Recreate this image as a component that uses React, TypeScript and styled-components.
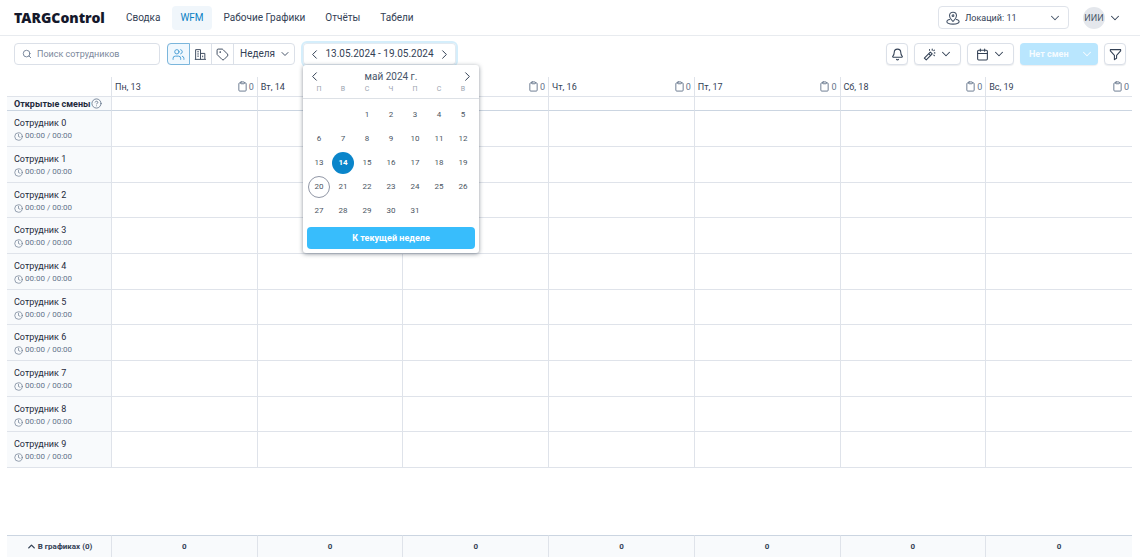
import React from 'react';
import styled, { createGlobalStyle, css } from 'styled-components';
import { Bell, Calendar, ChevronDown, ChevronLeft, ChevronRight, ChevronUp, CircleHelp, Clipboard, Clock, Search, Tag, Users } from 'lucide-react';

const GlobalStyle = createGlobalStyle`
  *, *::before, *::after { box-sizing: border-box; }
  body { margin: 0; background: #fff; color: #334155; font-family: Roboto, Inter, sans-serif; font-size: 10px; line-height: 12px; }
  button, input, select { font: inherit; color: inherit; margin: 0; }
  button { cursor: pointer; }
  svg { flex: none; display: block; }
`;

const Page = styled.div`
  display: flex;
  flex-direction: column;
  min-height: 100vh;
`;

const Header = styled.header`
  display: flex;
  align-items: center;
  height: 36px;
  padding: 0 18px 0 14px;
  border-bottom: 1px solid #e8ebef;
`;

const Logo = styled.a`
  width: 104px;
  color: #14182b;
  font-family: "Noto Sans", sans-serif;
  font-size: 14px;
  font-weight: 900;
  line-height: 20px;
  text-decoration: none;
`;

const Nav = styled.nav`
  display: flex;
  flex: 1;
  gap: 4px;
`;

const NavLink = styled.a<{ $active?: boolean }>`
  padding: 6px 8px;
  border-radius: 4px;
  color: ${p => (p.$active ? '#0a7fc4' : '#334155')};
  background: ${p => (p.$active ? '#f0f6fb' : 'transparent')};
  text-decoration: none;
`;

const SelectBox = styled.label<{ $wide?: boolean }>`
  display: flex;
  align-items: center;
  flex: 1;
  color: #475569;
  ${p => p.$wide && css`
    flex: none;
    width: 131px;
    height: 23px;
    gap: 5px;
    padding: 0 6px 0 7px;
    border: 1px solid #dfe3ea;
    border-radius: 4px;
  `}
`;

const Select = styled.select<{ $small?: boolean }>`
  flex: 1;
  min-width: 0;
  padding: 0;
  border: 0;
  outline: 0;
  appearance: none;
  background: transparent;
  color: #334155;
  font-size: ${p => (p.$small ? '9px' : '10px')};
`;

const Account = styled.button`
  display: flex;
  align-items: center;
  gap: 3px;
  margin-left: 14px;
  padding: 0;
  border: 0;
  background: none;
`;

const Avatar = styled.span`
  width: 22px;
  height: 22px;
  border-radius: 50%;
  background: #e4e7ec;
  color: #475569;
  font-size: 9px;
  line-height: 22px;
  text-align: center;
`;

const Toolbar = styled.div`
  display: flex;
  align-items: center;
  height: 36px;
  padding: 0 14px;
`;

const SearchBox = styled.label`
  display: flex;
  align-items: center;
  gap: 5px;
  width: 146px;
  height: 22px;
  margin-right: 7px;
  padding: 0 7px;
  border: 1px solid #dbe0e8;
  border-radius: 4px;
  color: #64748b;
`;

const SearchInput = styled.input`
  flex: 1;
  min-width: 0;
  padding: 0;
  border: 0;
  outline: 0;
  background: none;
  font-size: 9px;
  &::placeholder { color: #7c899c; opacity: 1; }
`;

const ViewGroup = styled.div`
  display: flex;
  height: 22px;
  margin-right: 8px;
  border: 1px solid #dbe0e8;
  border-radius: 4px;
`;

const ViewButton = styled.button<{ $active?: boolean }>`
  display: grid;
  place-items: center;
  width: 22px;
  padding: 0;
  border: 0;
  border-right: 1px solid #dbe0e8;
  background: none;
  color: #3f4c60;
  ${p => p.$active && css`
    margin: -1px 0 -1px -1px;
    width: 23px;
    border: 1px solid #7bb6dc;
    border-radius: 4px 0 0 4px;
    background: #f0f8fe;
    color: #4a9fd6;
  `}
`;

const Period = styled.div`
  display: flex;
  width: 60px;
  padding: 0 3px 0 6px;
`;

const DatePicker = styled.div`
  position: relative;
  flex: none;
`;

const DateRange = styled.div`
  display: flex;
  align-items: center;
  justify-content: space-between;
  width: 153px;
  height: 22px;
  padding: 0 4px;
  border-radius: 4px;
  box-shadow: 0 0 0 2px #d5eefb, inset 0 0 0 1px #e3eaf1;
`;

const PlainButton = styled.button`
  display: flex;
  align-items: center;
  padding: 0;
  border: 0;
  background: none;
  color: #334155;
`;

const Popup = styled.div`
  position: absolute;
  z-index: 2;
  top: 22px;
  left: 0;
  width: 176px;
  padding: 4px;
  border-radius: 3px;
  background: #fff;
  box-shadow: 0 1px 4px rgba(30, 41, 59, 0.5);
`;

const MonthBar = styled.div`
  display: flex;
  align-items: center;
  justify-content: space-between;
  height: 15px;
  color: #475569;
`;

const Days = styled.table`
  width: 100%;
  table-layout: fixed;
  border-collapse: collapse;
  color: #4b5563;
  font-size: 8px;
  text-align: center;
  th, td { padding: 0; }
  th { padding-bottom: 4px; color: #9aa3af; font-size: 7px; line-height: 10px; font-weight: 400; }
  td { height: 24px; }
`;

const Rule = styled.hr`
  margin: 0 -4px 4px;
  border: 0;
  border-top: 1px solid #dde1e6;
`;

const Day = styled.button<{ $selected?: boolean; $today?: boolean }>`
  display: block;
  width: 22px;
  height: 22px;
  margin: 0 auto;
  padding: 0;
  border: ${p => (p.$today ? '1px solid #9197a6' : '0')};
  border-radius: 50%;
  background: ${p => (p.$selected ? '#0a85ca' : 'transparent')};
  color: ${p => (p.$selected ? '#fff' : 'inherit')};
  font-weight: ${p => (p.$selected ? 700 : 400)};
`;

const CurrentWeek = styled.button`
  display: block;
  width: 100%;
  height: 22px;
  margin-top: 4px;
  padding: 0;
  border: 0;
  border-radius: 4px;
  background: #38bdfc;
  color: #fff;
  font-size: 9px;
  font-weight: 700;
`;

const Actions = styled.div`
  display: flex;
  gap: 6px;
  margin-left: auto;
`;

const Action = styled.button<{ $menu?: boolean }>`
  display: flex;
  align-items: center;
  justify-content: center;
  gap: 3px;
  width: ${p => (p.$menu ? '47px' : '22px')};
  height: 22px;
  padding: 0;
  border: 1px solid #dbe0e8;
  border-radius: 4px;
  background: #fff;
  box-shadow: 0 1px 1px rgba(30, 41, 59, 0.08);
  color: #334155;
`;

const Publish = styled(Action)`
  justify-content: space-between;
  width: 78px;
  padding: 0 4px 0 9px;
  border: 0;
  background: #b9e6fe;
  color: #f5fbff;
  font-size: 9px;
  font-weight: 700;
`;

const Main = styled.main`
  display: flex;
  flex: 1;
  flex-direction: column;
  justify-content: space-between;
  padding: 5px 8px 0 7px;
`;

const Schedule = styled.table`
  width: 100%;
  table-layout: fixed;
  border-collapse: separate;
  border-spacing: 0;
  th, td { padding: 0; text-align: left; font-weight: 400; border-right: 1px solid #dfe3ea; }
  tr > :last-child { border-right: 0; }
`;

const NameCol = styled.col`
  width: 105px;
`;

const HeadRow = styled.tr`
  height: 20px;
  th, td { border-bottom: 1px solid #dfe3ea; }
`;

const DayHead = styled.div`
  display: flex;
  align-items: center;
  gap: 1px;
  padding: 0 3px;
  color: #334155;
  font-size: 9px;
  span { flex: 1; }
  b { color: #64748b; font-weight: 400; }
`;

const OpenRow = styled.tr`
  height: 14px;
  th, td { border-bottom: 1px solid #cbd5e1; }
  th { background: #f8fafc; }
`;

const OpenLabel = styled.div`
  display: flex;
  align-items: center;
  gap: 1px;
  padding-left: 7px;
  color: #1e293b;
  font-size: 9px;
  font-weight: 700;
  svg { color: #64748b; }
`;

const StaffRow = styled.tr`
  height: 36px;
  &:nth-child(3n) { height: 35px; }
  th, td { border-bottom: 1px solid #dfe3ea; }
  th { background: #f8fafc; vertical-align: top; }
`;

const Person = styled.div`
  padding: 6px 0 0 7px;
  color: #1e293b;
  font-size: 9px;
`;

const Hours = styled.div`
  display: flex;
  align-items: center;
  gap: 2px;
  margin-top: 1px;
  color: #64748b;
  font-size: 8px;
`;

const TotalRow = styled.tr`
  height: 22px;
  background: #f8fafc;
  th, td { border-top: 1px solid #cbd5e1; color: #334155; font-size: 8px; font-weight: 700; text-align: center; }
`;

const TotalToggle = styled(PlainButton)`
  gap: 1px;
  margin: 0 auto;
`;

const days = ['Пн, 13', 'Вт, 14', 'Ср, 15', 'Чт, 16', 'Пт, 17', 'Сб, 18', 'Вс, 19'];
const weeks = [[0, 0, 1, 2, 3, 4, 5], [6, 7, 8, 9, 10, 11, 12], [13, 14, 15, 16, 17, 18, 19], [20, 21, 22, 23, 24, 25, 26], [27, 28, 29, 30, 31, 0, 0]];
const staff = Array.from({ length: 10 }, (_, i) => `Сотрудник ${i}`);

const LocationIcon = () => (
  <svg width="14" height="14" viewBox="0 0 24 24" fill="none" stroke="currentColor" strokeWidth="1.8" strokeLinecap="round" strokeLinejoin="round">
    <path d="M12 18c-2-2.200-6-5.500-6-10a6 6 0 0 1 12 0c0 4.500-4 7.800-6 10Z" />
    <circle cx="12" cy="8" r="1.500" />
    <path d="M6.500 14.500C3.500 15 1.500 16.300 1.500 18c0 2.500 4.700 4.500 10.500 4.500s10.500-2 10.500-4.500c0-1.700-2-3-5-3.500" />
  </svg>
);

const BuildingIcon = () => (
  <svg width="13" height="13" viewBox="0 0 24 24" fill="none" stroke="currentColor" strokeWidth="1.800" strokeLinejoin="round">
    <path d="M3 21V3h9v18M12 10h8v11H1.500M20 21h2M6 7h3M6 11h3M6 15h3M16 14v3" />
  </svg>
);

const WandIcon = () => (
  <svg width="13" height="13" viewBox="0 0 24 24" fill="none" stroke="currentColor" strokeWidth="2" strokeLinecap="round" strokeLinejoin="round">
    <path d="M2.500 18.500 13.500 7.500 17 11 6 22ZM10.500 10.500l3.500 3.500" />
    <path d="M12 3v1M17 2v2M21 4l-1 1M22 9h-1M21 14l-1-1" />
  </svg>
);

const FunnelIcon = () => (
  <svg width="13" height="13" viewBox="0 0 24 24" fill="none" stroke="currentColor" strokeWidth="2" strokeLinejoin="round">
    <path d="M2.500 3h19v2.500L14 13.500V19l-4 2.500v-8L2.500 5.500Z" />
  </svg>
);

const Columns = () => (
  <colgroup>
    <NameCol />
    {days.map(d => <col key={d} />)}
  </colgroup>
);

export default function App() {
  return (
    <Page>
      <GlobalStyle />
      <Header>
        <Logo href="#">TARGControl</Logo>
        <Nav>
          <NavLink href="#">Сводка</NavLink>
          <NavLink href="#" $active>WFM</NavLink>
          <NavLink href="#">Рабочие Графики</NavLink>
          <NavLink href="#">Отчёты</NavLink>
          <NavLink href="#">Табели</NavLink>
        </Nav>
        <SelectBox $wide>
          <LocationIcon />
          <Select $small aria-label="Локации"><option>Локаций: 11</option></Select>
          <ChevronDown size={14} strokeWidth={1.8} />
        </SelectBox>
        <Account aria-label="Профиль">
          <Avatar>ИИИ</Avatar>
          <ChevronDown size={14} strokeWidth={1.8} />
        </Account>
      </Header>

      <Toolbar>
        <SearchBox>
          <Search size={10} />
          <SearchInput placeholder="Поиск сотрудников" aria-label="Поиск сотрудников" />
        </SearchBox>
        <ViewGroup>
          <ViewButton $active aria-label="Сотрудники"><Users size={13} strokeWidth={1.8} /></ViewButton>
          <ViewButton aria-label="Локации"><BuildingIcon /></ViewButton>
          <ViewButton aria-label="Метки"><Tag size={13} strokeWidth={1.8} /></ViewButton>
          <Period>
            <SelectBox>
              <Select aria-label="Период"><option>Неделя</option></Select>
              <ChevronDown size={12} />
            </SelectBox>
          </Period>
        </ViewGroup>
        <DatePicker>
          <DateRange>
            <PlainButton aria-label="Предыдущая неделя"><ChevronLeft size={15} strokeWidth={1.6} /></PlainButton>
            <PlainButton>13.05.2024 - 19.05.2024</PlainButton>
            <PlainButton aria-label="Следующая неделя"><ChevronRight size={15} strokeWidth={1.6} /></PlainButton>
          </DateRange>
          <Popup>
            <MonthBar>
              <PlainButton aria-label="Предыдущий месяц"><ChevronLeft size={15} strokeWidth={1.6} /></PlainButton>
              <span>май 2024 г.</span>
              <PlainButton aria-label="Следующий месяц"><ChevronRight size={15} strokeWidth={1.6} /></PlainButton>
            </MonthBar>
            <Days>
              <thead>
                <tr>{['П', 'В', 'С', 'Ч', 'П', 'С', 'В'].map((d, i) => <th key={i}>{d}</th>)}</tr>
              </thead>
            </Days>
            <Rule />
            <Days>
              <tbody>
                {weeks.map((week, i) => (
                  <tr key={i}>
                    {week.map((d, j) => <td key={j}>{d > 0 && <Day $selected={d === 14} $today={d === 20}>{d}</Day>}</td>)}
                  </tr>
                ))}
              </tbody>
            </Days>
            <CurrentWeek>К текущей неделе</CurrentWeek>
          </Popup>
        </DatePicker>
        <Actions>
          <Action aria-label="Уведомления"><Bell size={13} /></Action>
          <Action $menu aria-label="Автозаполнение"><WandIcon /><ChevronDown size={14} strokeWidth={1.8} /></Action>
          <Action $menu aria-label="Календарь"><Calendar size={13} /><ChevronDown size={14} strokeWidth={1.8} /></Action>
          <Publish>Нет смен<ChevronDown size={14} strokeWidth={1.8} /></Publish>
          <Action aria-label="Фильтр"><FunnelIcon /></Action>
        </Actions>
      </Toolbar>

      <Main>
        <Schedule>
          <Columns />
          <thead>
            <HeadRow>
              <td />
              {days.map(d => (
                <th key={d} scope="col">
                  <DayHead><span>{d}</span><Clipboard size={11} color="#64748b" /><b>0</b></DayHead>
                </th>
              ))}
            </HeadRow>
            <OpenRow>
              <th scope="row"><OpenLabel>Открытые смены<CircleHelp size={11} strokeWidth={1.8} /></OpenLabel></th>
              {days.map(d => <td key={d} />)}
            </OpenRow>
          </thead>
          <tbody>
            {staff.map(name => (
              <StaffRow key={name}>
                <th scope="row">
                  <Person>
                    {name}
                    <Hours><Clock size={9} strokeWidth={1.8} />00:00 / 00:00</Hours>
                  </Person>
                </th>
                {days.map(d => <td key={d} />)}
              </StaffRow>
            ))}
          </tbody>
        </Schedule>
        <Schedule>
          <Columns />
          <tbody>
            <TotalRow>
              <th scope="row"><TotalToggle><ChevronUp size={11} strokeWidth={3} />В графиках (0)</TotalToggle></th>
              {days.map(d => <td key={d}>0</td>)}
            </TotalRow>
          </tbody>
        </Schedule>
      </Main>
    </Page>
  );
}
